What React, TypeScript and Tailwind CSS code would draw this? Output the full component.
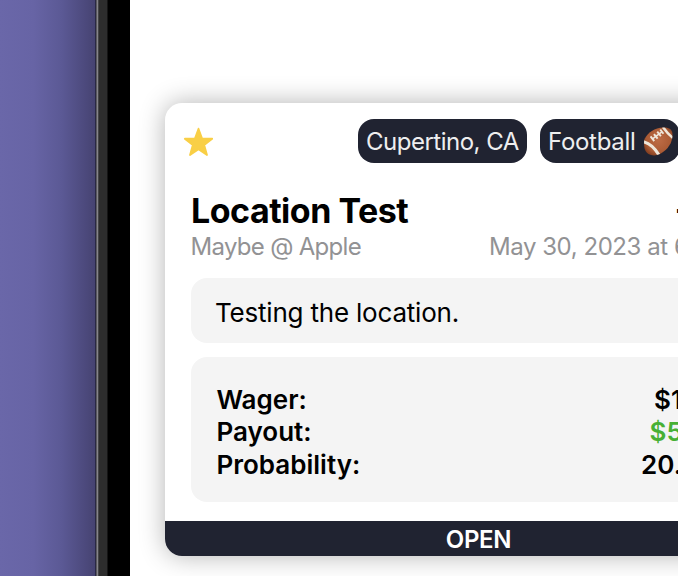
const Football = () => (
  <svg viewBox="0 0 32 32" className="h-[31px] w-[31px] shrink-0">
    <defs>
      <radialGradient id="leather" cx="0.5" cy="0.45" r="0.6">
        <stop offset="0" stopColor="#bd6c46" />
        <stop offset="0.65" stopColor="#ab5b35" />
        <stop offset="1" stopColor="#743419" />
      </radialGradient>
      <clipPath id="ball">
        <path d="M1.500 13.500C5 6.500 12 2 21 1.500c6-.3 9 2 9.400 6.500C31 16.500 26 24 18.500 28.500c-5 2.800-11 2.500-14.500-1C1 24.500 .5 18 1.500 13.500z" />
      </clipPath>
    </defs>
    <g clipPath="url(#ball)">
      <path d="M0 0h32v32H0z" fill="url(#leather)" />
      <path d="M0 16Q10 18.500 16.500 30" fill="none" stroke="#eee6da" strokeWidth="3.200" />
      <path d="M20.500 1Q25 7.500 31 12.500" fill="none" stroke="#eee6da" strokeWidth="2.600" />
      <path d="M9.500 13.500 19.500 6" stroke="#eee6da" strokeWidth="1.600" />
      <path d="M7.800 10.800l3.800 4.800M11.300 8.300l3.800 4.800M14.700 5.800l3.800 4.800M17.800 3.600l3.300 4.400" stroke="#eee6da" strokeWidth="2" />
    </g>
  </svg>
);

const Star = () => (
  <svg viewBox="0 0 32 30" className="mt-px ml-[18px] h-[30px] w-[32px] shrink-0">
    <path
      d="M15.500 1.700 19 11.300 29.200 11.700 21.200 18 24 28 15.500 22.300 7 28 9.800 18 1.800 11.700 12 11.300z"
      fill="#f9cf46"
      stroke="#f9cf46"
      strokeWidth="1.800"
      strokeLinejoin="round"
    />
  </svg>
);

const PhoneEdge = () => (
  <div className="flex h-full w-[130px] shrink-0">
    <div className="w-[95px] bg-[linear-gradient(90deg,#6a67a9_0%,#6764a5_35%,#5b5995_65%,#4c497c_90%,#464371_100%)]" />
    <div className="w-px bg-[#292844]" />
    <div className="w-px bg-[#5a595f]" />
    <div className="w-px bg-[#85848a]" />
    <div className="w-px bg-[#454547]" />
    <div className="w-2 bg-[#2d2d2d]" />
    <div className="w-px bg-[#151515]" />
    <div className="flex-1 bg-black" />
  </div>
);

export default function App() {
  return (
    <div className="flex h-[576px] w-[678px] overflow-hidden bg-white font-['Inter',sans-serif] whitespace-nowrap text-black">
      <PhoneEdge />
      <main className="w-[548px] shrink-0 overflow-hidden pt-[103px] pl-[35px]">
        <article className="flex h-[453px] w-[627px] flex-col overflow-hidden rounded-[17px] bg-white shadow-[0_0_26px_rgba(0,0,0,0.3)]">
          <header className="flex h-[76px] items-center">
            <Star />
            <div className="ml-[143px] flex h-[44px] w-[169px] items-center rounded-[16px] bg-[#202331] pt-[2px] pl-2 text-[24px] text-[#eeeeef]">
              <span className="tracking-[-0.5px]">Cupertino, CA</span>
            </div>
            <div className="ml-[13px] flex h-[44px] w-[140px] items-center rounded-[16px] bg-[#202331] pl-2 text-[24px] text-[#eeeeef]">
              <span className="w-[95px] pt-[2px] tracking-[-0.3px]">Football</span>
              <Football />
            </div>
          </header>

          <div className="flex h-[52px] items-end pl-[26px] text-[34px] leading-[40px] font-bold">
            <h1 className="w-[483px] tracking-[-0.5px]">Location Test</h1>
            <span>+400</span>
          </div>
          <div className="flex h-[32px] items-center pb-px pl-[25.500px] text-[24px] text-[#929294]">
            <span className="w-[298.500px] tracking-[-0.700px]">Maybe @ Apple</span>
            <span className="tracking-[-0.450px]">May 30, 2023 at 6</span>
          </div>

          <section className="mt-[15px] ml-[25.500px] flex h-[65px] w-[576px] items-center rounded-[16px] bg-[#f4f4f4] pt-[3px] pl-[24.500px] text-[26px]">
            <p className="tracking-[-0.200px]">Testing the location.</p>
          </section>

          <section className="mt-[14px] ml-[25.500px] flex h-[145px] w-[576px] flex-col rounded-[16px] bg-[#f4f4f4] pt-[26.500px] pl-[26px] text-[26px] leading-[32.500px] font-semibold">
            <div className="flex">
              <span className="w-[437.500px]">Wager:</span>
              <span>$1</span>
            </div>
            <div className="flex">
              <span className="w-[433px]">Payout:</span>
              <span className="text-[#47b034]">$5</span>
            </div>
            <div className="flex">
              <span className="w-[424.500px]">Probability:</span>
              <span>20.</span>
            </div>
          </section>

          <footer className="mt-auto flex h-[35px] items-center justify-center bg-[#202331] pt-[2px] text-[24px] font-semibold text-white">
            <span className="tracking-[-0.300px]">OPEN</span>
          </footer>
        </article>
      </main>
    </div>
  );
}
